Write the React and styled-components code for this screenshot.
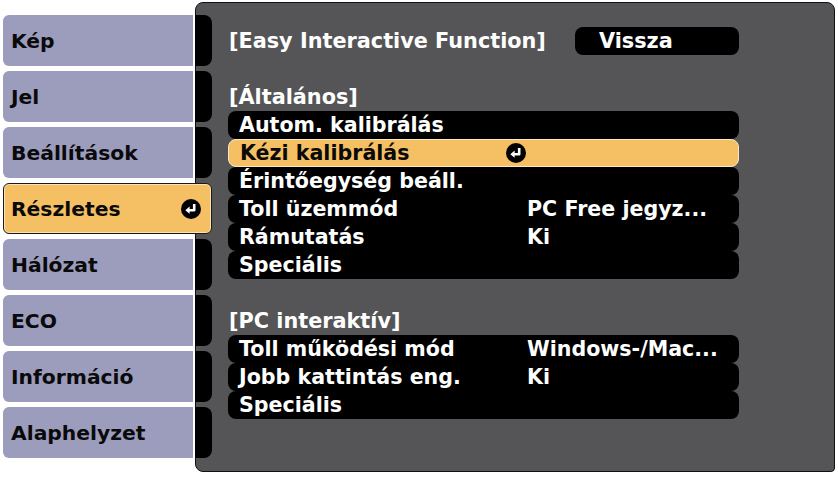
import React from "react";
import styled, { createGlobalStyle } from "styled-components";

const Global = createGlobalStyle`
  html, body { margin: 0; padding: 0; background: #ffffff; }
  body { font-family: "DejaVu Sans", "Noto Sans", sans-serif; }
`;

const Page = styled.div`
  width: 838px;
  height: 477px;
  box-sizing: border-box;
  padding: 2px 0 0 3px;
  display: flex;
  align-items: flex-start;
  overflow: hidden;
`;

const Sidebar = styled.div`
  width: 209px;
  margin-top: 13px;
  margin-right: -17px;
  position: relative;
  z-index: 1;
  display: flex;
  flex-direction: column;
  gap: 5px;
`;

const Tab = styled.div`
  height: 51px;
  display: flex;
  align-items: stretch;
`;

const TabLabel = styled.div`
  width: 190px;
  box-sizing: border-box;
  padding-left: 8px;
  background: #9c9cbd;
  border-radius: 6px 0 0 6px;
  display: flex;
  align-items: center;
  font-weight: bold;
  font-size: 20.3px;
  color: #0a0a0a;
`;

const TabEnd = styled.div`
  width: 17px;
  margin-left: 2px;
  background: #000;
  border-radius: 0 8px 8px 0;
`;

const SelectedTab = styled.div`
  height: 51px;
  box-sizing: border-box;
  background: #f5c064;
  border: 1px solid #1a1a1a;
  box-shadow: inset 0 0 0 1px #fbe3b4;
  border-radius: 6px;
  display: flex;
  align-items: center;
  justify-content: space-between;
  padding: 0 10px 0 7px;
  font-weight: bold;
  font-size: 20.3px;
  color: #0a0a0a;
`;

const Panel = styled.div`
  width: 640px;
  height: 470px;
  box-sizing: border-box;
  background: #555557;
  border: 1px solid #111;
  border-radius: 8px 8px 4px 8px;
  padding: 24px 0 0 32px;
  display: flex;
  flex-direction: column;
`;

const Header = styled.div`
  width: 511px;
  height: 28px;
  display: flex;
  align-items: center;
  justify-content: space-between;
`;

const Title = styled.div`
  color: #fff;
  font-weight: bold;
  font-size: 20.8px;
  padding-left: 1px;
`;

const Pill = styled.div`
  width: 164px;
  height: 28px;
  box-sizing: border-box;
  background: #000;
  border-radius: 8px;
  padding-left: 24px;
  display: flex;
  align-items: center;
  color: #fff;
  font-weight: bold;
  font-size: 20.8px;
`;

const SectionLabel = styled.div`
  height: 28px;
  margin-top: 28px;
  display: flex;
  align-items: center;
  padding-left: 1px;
  color: #fff;
  font-weight: bold;
  font-size: 20.8px;
`;

const Rows = styled.div`
  display: flex;
  flex-direction: column;
  width: 511px;
`;

const Row = styled.div`
  height: 28px;
  box-sizing: border-box;
  display: grid;
  grid-template-columns: 266px 22px 1fr;
  align-items: center;
  padding-left: 11px;
  border-radius: 8px;
  background: ${(p) => (p.$selected ? "#f5c064" : "#000")};
  color: ${(p) => (p.$selected ? "#0a0a0a" : "#fff")};
  border: ${(p) => (p.$selected ? "1px solid #fbe8c2" : "none")};
  font-weight: bold;
  font-size: 20.6px;
  white-space: nowrap;
`;

const RowLabel = styled.span``;
const RowMark = styled.span`
  display: flex;
  align-items: center;
`;
const RowValue = styled.span``;

const EnterIcon = ({ size = 20 }) => (
  <svg width={size} height={size} viewBox="0 0 20 20">
    <circle cx="10" cy="10" r="10" fill="#000" />
    <path d="M13.2 5 V11.2 H8" stroke="#fff" strokeWidth="2.6" fill="none" strokeLinejoin="round" />
    <path d="M4.3 11.2 L8.6 7.6 L8.6 14.8 Z" fill="#fff" />
  </svg>
);

const tabs = ["Kép", "Jel", "Beállítások", "Részletes", "Hálózat", "ECO", "Információ", "Alaphelyzet"];

const general = [
  { label: "Autom. kalibrálás" },
  { label: "Kézi kalibrálás", selected: true },
  { label: "Érintőegység beáll." },
  { label: "Toll üzemmód", value: "PC Free jegyz..." },
  { label: "Rámutatás", value: "Ki" },
  { label: "Speciális" },
];

const pc = [
  { label: "Toll működési mód", value: "Windows-/Mac..." },
  { label: "Jobb kattintás eng.", value: "Ki" },
  { label: "Speciális" },
];

const renderRows = (items) =>
  items.map((r) => (
    <Row key={r.label} $selected={r.selected}>
      <RowLabel>{r.label}</RowLabel>
      <RowMark>{r.selected ? <EnterIcon /> : null}</RowMark>
      <RowValue>{r.value}</RowValue>
    </Row>
  ));

export default function App() {
  return (
    <>
      <Global />
      <Page>
        <Sidebar>
          {tabs.map((t) =>
            t === "Részletes" ? (
              <SelectedTab key={t}>
                <span>{t}</span>
                <EnterIcon />
              </SelectedTab>
            ) : (
              <Tab key={t}>
                <TabLabel>{t}</TabLabel>
                <TabEnd />
              </Tab>
            )
          )}
        </Sidebar>
        <Panel>
          <Header>
            <Title>[Easy Interactive Function]</Title>
            <Pill>Vissza</Pill>
          </Header>
          <SectionLabel>[Általános]</SectionLabel>
          <Rows>{renderRows(general)}</Rows>
          <SectionLabel>[PC interaktív]</SectionLabel>
          <Rows>{renderRows(pc)}</Rows>
        </Panel>
      </Page>
    </>
  );
}
